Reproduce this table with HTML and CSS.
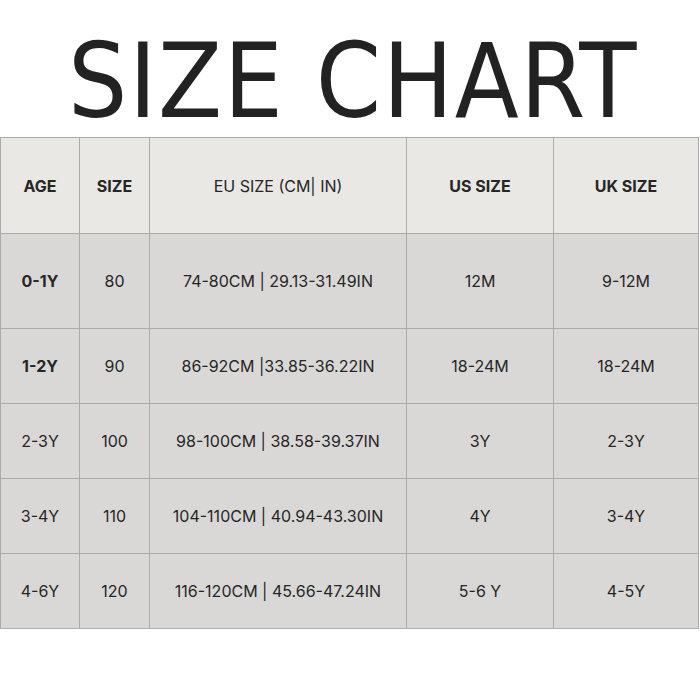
FILE: index.html
```html
<!DOCTYPE html>
<html>
<head>
<meta charset="utf-8">
<link rel="stylesheet" href="styles.css">
</head>
<body>
<div class="page">
  <h1 class="title">SIZE CHART</h1>
  <table class="chart">
    <colgroup>
      <col class="c-age"><col class="c-size"><col class="c-eu"><col class="c-us"><col class="c-uk">
    </colgroup>
    <thead>
      <tr>
        <th class="bold">AGE</th>
        <th class="bold">SIZE</th>
        <th>EU SIZE (CM| IN)</th>
        <th class="bold">US SIZE</th>
        <th class="bold">UK SIZE</th>
      </tr>
    </thead>
    <tbody>
      <tr class="tall">
        <td class="bold">0-1Y</td><td>80</td><td>74-80CM | 29.13-31.49IN</td><td>12M</td><td>9-12M</td>
      </tr>
      <tr>
        <td class="bold">1-2Y</td><td>90</td><td>86-92CM |33.85-36.22IN</td><td>18-24M</td><td>18-24M</td>
      </tr>
      <tr>
        <td>2-3Y</td><td>100</td><td>98-100CM | 38.58-39.37IN</td><td>3Y</td><td>2-3Y</td>
      </tr>
      <tr>
        <td>3-4Y</td><td>110</td><td>104-110CM | 40.94-43.30IN</td><td>4Y</td><td>3-4Y</td>
      </tr>
      <tr>
        <td>4-6Y</td><td>120</td><td>116-120CM | 45.66-47.24IN</td><td>5-6 Y</td><td>4-5Y</td>
      </tr>
    </tbody>
  </table>
</div>
</body>
</html>
```
FILE: styles.css
```css
html, body {
  margin: 0;
  padding: 0;
  background: #ffffff;
}
.page {
  width: 700px;
  height: 700px;
  background: #ffffff;
}
.title {
  margin: 0;
  height: 137px;
  box-sizing: border-box;
  padding-top: 24px;
  padding-left: 6px;
  display: flex;
  align-items: center;
  justify-content: center;
  font-family: "DejaVu Sans Condensed", "DejaVu Sans", sans-serif;
  font-stretch: condensed;
  font-weight: 400;
  font-size: 104px;
  letter-spacing: 1.6px;
  color: #222222;
  line-height: 1;
}
.chart {
  border-collapse: collapse;
  table-layout: fixed;
  width: 698px;
  font-family: Inter, "Liberation Sans", sans-serif;
  font-size: 16px;
  color: #262626;
}
.c-age { width: 79px; }
.c-size { width: 70px; }
.c-eu { width: 257px; }
.c-us { width: 147px; }
.c-uk { width: 145px; }
.chart th, .chart td {
  border: 1.5px solid #ababab;
  text-align: center;
  vertical-align: middle;
  padding: 0;
  font-weight: 400;
}
.chart thead tr {
  height: 96px;
  background: #e9e8e5;
}
.chart tbody tr {
  height: 75px;
  background: #d9d8d7;
}
.chart tbody tr.tall {
  height: 95px;
}
.chart .bold {
  font-weight: 700;
}
.chart th:first-child, .chart td:first-child {
  border-left: 1px solid #ababab;
}
```
